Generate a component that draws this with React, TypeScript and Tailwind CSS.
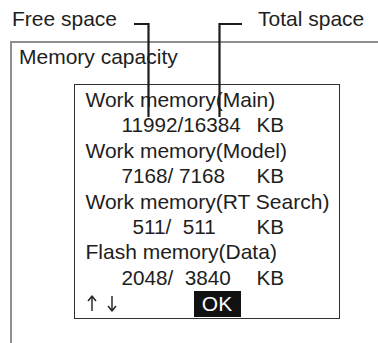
import React from "react";

// Callout lines drawn over the dialog (annotation overlay)
const Callouts: React.FC = () => (
  <svg className="absolute left-0 top-0 pointer-events-none" width={378} height={343}>
    <polyline points="134,24 148.5,24 148.5,117" fill="none" stroke="#1c1c1c" strokeWidth={2.2} />
    <polyline points="242,24 219.5,24 219.5,117" fill="none" stroke="#1c1c1c" strokeWidth={2.2} />
  </svg>
);

const Arrow: React.FC<{ down?: boolean }> = ({ down }) => (
  <svg width={10} height={17} viewBox="0 0 10 17" className={down ? "rotate-180" : ""}>
    <path d="M5 1.5 V16" stroke="#1e1e1e" strokeWidth={1.4} fill="none" />
    <path d="M1 6 L5 1.2 L9 6" stroke="#1e1e1e" strokeWidth={1.4} fill="none" />
  </svg>
);

const App: React.FC = () => {
  return (
    <div
      className="relative w-[378px] h-[343px] overflow-hidden bg-white text-[#1e1e1e]"
      style={{ fontFamily: '"Liberation Sans", Arial, sans-serif' }}
    >
      {/* header labels */}
      <div className="flex h-[41px] pt-[7px] text-[21px] leading-[23px]">
        <span className="ml-[12px]">Free space</span>
        <span className="ml-[141px]">Total space</span>
      </div>

      {/* outer panel, open on right and bottom */}
      <div className="ml-[10px] h-[302px] border-l-2 border-t-2 border-[#8f8f8f]">
        <div className="pl-[7px] pt-[1.5px] text-[21px] leading-[23px]">Memory capacity</div>

        <div className="mt-[16.5px] ml-[62px] w-[266px] border-[1.5px] border-[#303030] pt-[2px] pb-[1.5px] pl-[10.5px] text-[21px] leading-[25.4px]">
          <div>Work memory(Main)</div>
          <div className="flex whitespace-pre text-[20.7px]">
            <span className="w-[135px] pl-[36px] box-content">11992/16384</span>
            <span>KB</span>
          </div>
          <div>Work memory(Model)</div>
          <div className="flex whitespace-pre text-[20.7px]">
            <span className="w-[135px] pl-[36px] box-content">7168/ 7168</span>
            <span>KB</span>
          </div>
          <div>Work memory(RT Search)</div>
          <div className="flex whitespace-pre text-[20.7px]">
            <span className="w-[124px] pl-[47px] box-content">511/  511</span>
            <span>KB</span>
          </div>
          <div>Flash memory(Data)</div>
          <div className="flex whitespace-pre text-[20.7px]">
            <span className="w-[135px] pl-[36px] box-content">2048/  3840</span>
            <span>KB</span>
          </div>
          <div className="flex items-center h-[26px] mt-[0.5px]">
            <div className="flex w-[108px] items-center gap-[10px] pl-[1px]">
              <Arrow />
              <Arrow down />
            </div>
            <span className="bg-[#111] text-white w-[47px] h-[26px] leading-[26px] text-center">OK</span>
          </div>
        </div>
      </div>

      <Callouts />
    </div>
  );
};

export default App;
